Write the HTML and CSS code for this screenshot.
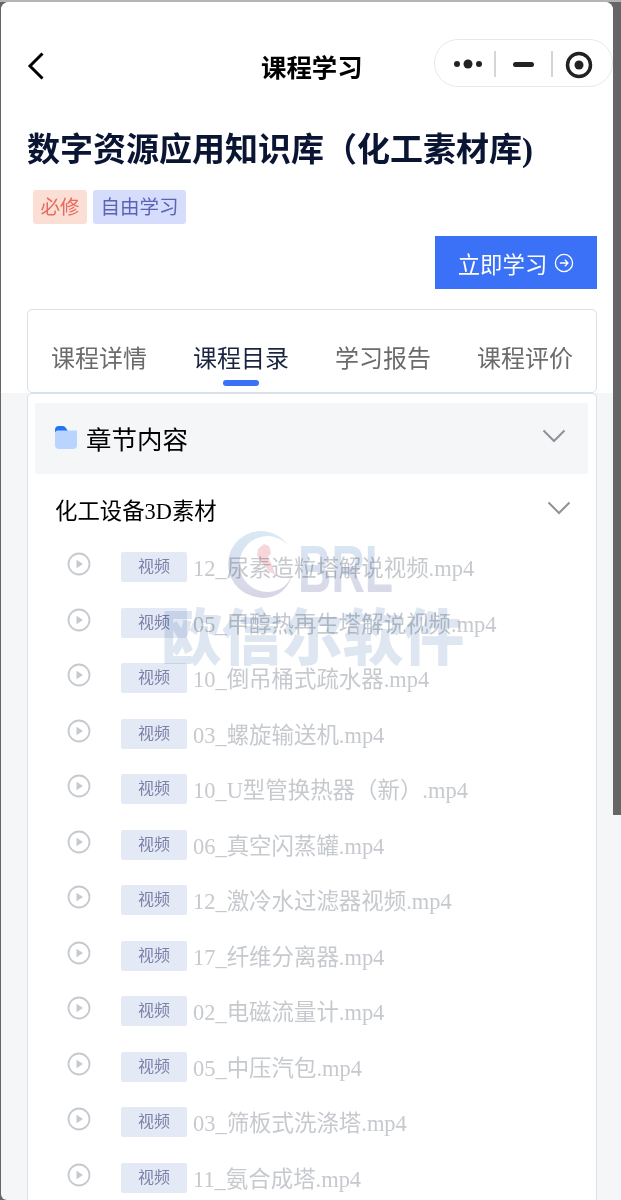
FILE: index.html
```html
<!DOCTYPE html>
<html lang="zh-CN">
<head>
  <meta charset="UTF-8">
  <title>课程学习</title>
  <meta name="viewport" content="width=device-width, initial-scale=1.0">
  <link rel="stylesheet" href="styles.css">
</head>
<body>
  <div class="top-strip"></div>

  <div class="window">
    <div class="phone">

      <!-- Header -->
      <div class="head">
        <div class="nav">
          <div class="back">
            <svg width="18" height="28" viewBox="0 0 18 28"><path d="M15.500 1.500 3 14l12.500 12.500" fill="none" stroke="#000" stroke-width="3"/></svg>
          </div>
          <div class="nav-title">课程学习</div>
          <div class="capsule">
            <svg width="179" height="48" viewBox="0 0 179 48">
              <circle cx="23" cy="25" r="3" fill="#222"/>
              <circle cx="34" cy="25" r="4.500" fill="#222"/>
              <circle cx="45" cy="25" r="3" fill="#222"/>
              <rect x="60" y="12" width="2" height="26" fill="#d5d5d5"/>
              <rect x="79" y="23" width="21" height="5" rx="2.500" fill="#222"/>
              <rect x="117" y="12" width="2" height="26" fill="#d5d5d5"/>
              <circle cx="145" cy="26" r="11.500" fill="none" stroke="#222" stroke-width="3.500"/>
              <circle cx="145" cy="26" r="4.500" fill="#222"/>
            </svg>
          </div>
        </div>

        <h1 class="course-title">数字资源应用知识库（化工素材库)</h1>

        <div class="tags">
          <span class="tag tag-red">必修</span>
          <span class="tag tag-blue">自由学习</span>
        </div>

        <div class="action">
          <button class="study-btn">立即学习
            <svg width="20" height="20" viewBox="0 0 20 20" fill="none" stroke="#fff" stroke-width="1.300"><circle cx="10" cy="10" r="8.600"/><path d="M5.800 10h8M10.800 6.800 14 10l-3.200 3.200"/></svg>
          </button>
        </div>

        <div class="tabs">
          <div class="tab">课程详情</div>
          <div class="tab active">课程目录</div>
          <div class="tab">学习报告</div>
          <div class="tab">课程评价</div>
        </div>
      </div>

      <!-- Catalogue -->
      <div class="catalog">
        <div class="chapter">
          <svg class="folder" width="22" height="23" viewBox="0 0 22 23">
            <path d="M0 6V4a4 4 0 0 1 4-4h4a3 3 0 0 1 2.500 1.500L13 5v1z" fill="#2273f5"/>
            <path d="M0 7a3 3 0 0 1 2-2.500h20V19a4 4 0 0 1-4 4H4a4 4 0 0 1-4-4z" fill="#b8d4ff"/>
          </svg>
          <span class="chapter-name">章节内容</span>
          <svg class="chev chev-up" width="24" height="14" viewBox="0 0 24 14"><path d="M1.500 1.500 12 12 22.500 1.500" fill="none" stroke="#8d9296" stroke-width="2"/></svg>
        </div>

        <div class="section">
          <span class="section-name">化工设备3D素材</span>
          <svg class="chev" width="24" height="14" viewBox="0 0 24 14"><path d="M1.500 1.500 12 12 22.500 1.500" fill="none" stroke="#8d9296" stroke-width="2"/></svg>
        </div>

        <ul class="files" id="files"></ul>
      </div>

      <!-- Watermark -->
      <svg class="watermark" width="340" height="170" viewBox="0 0 340 170">
        <defs>
          <linearGradient id="wmGrad" x1="0" y1="0" x2="0" y2="1">
            <stop offset="0" stop-color="#d8e9f5"/>
            <stop offset="1" stop-color="#d8d5e6"/>
          </linearGradient>
        </defs>
        <path d="M128 17A33 33 0 1 0 128 55A28 28 0 1 1 128 17z" fill="url(#wmGrad)"/>
        <path d="M84 12a30 30 0 0 1 44 8 31 31 0 0 0-44-8z" fill="#d8e9f5"/>
        <path d="M80 58a29 29 0 0 0 52-12 31 31 0 0 1-52 12z" fill="#d8d5e6"/>
        <path d="M98 21l6-5 5 2 2 7-3 4 5 10 2 8-6-4-7-8-5-8z" fill="#f6d6da"/>
        <text class="wm-letters" x="138" y="64" textLength="95" lengthAdjust="spacingAndGlyphs" fill="url(#wmGrad)">BRL</text>
        <text class="wm-name" x="1" y="132" textLength="303" fill="#dde6f1">欧信尔软件</text>
      </svg>

    </div>

    <div class="scroll-track"><div class="scroll-thumb"></div></div>
  </div>

  <script src="app.js"></script>
</body>
</html>
```

FILE: app.js
```js
const fileNames = [
  "12_尿素造粒塔解说视频.mp4",
  "05_甲醇热再生塔解说视频.mp4",
  "10_倒吊桶式疏水器.mp4",
  "03_螺旋输送机.mp4",
  "10_U型管换热器（新）.mp4",
  "06_真空闪蒸罐.mp4",
  "12_激冷水过滤器视频.mp4",
  "17_纤维分离器.mp4",
  "02_电磁流量计.mp4",
  "05_中压汽包.mp4",
  "03_筛板式洗涤塔.mp4",
  "11_氨合成塔.mp4"
];

const playIcon =
  '<svg class="play" width="24" height="24" viewBox="0 0 24 24">' +
  '<circle cx="12" cy="12" r="10.500" fill="none" stroke="#c6c9ce" stroke-width="1.800"/>' +
  '<path d="M9.500 7.800v8.400l6.500-4.200z" fill="#c6c9ce"/></svg>';

document.getElementById("files").innerHTML = fileNames.map(name =>
  '<li class="file">' + playIcon +
  '<span class="badge">视频</span>' +
  '<span class="file-name">' + name + '</span></li>'
).join("");
```

FILE: styles.css
```css
* {
  margin: 0;
  padding: 0;
  box-sizing: border-box;
}

html, body {
  height: 1200px;
  overflow: hidden;
}

body {
  background: #666;
  font-family: "Liberation Serif", "Noto Sans CJK SC", serif;
}

.top-strip {
  height: 2px;
  background: #b4b4b4;
}

.window {
  display: flex;
  height: 1198px;
  padding-left: 1px;
}

.phone {
  position: relative;
  width: 612px;
  height: 1198px;
  background: #f5f6f8;
  border-radius: 8px 8px 0 6px;
  overflow: hidden;
  flex-shrink: 0;
}

.scroll-track {
  flex: 1;
  background: #f5f6f8;
}

.scroll-thumb {
  height: 813px;
  background: #666;
}

/* HEADER */
.head {
  height: 391px;
  background: #fff;
  padding: 37px 0 0 26px;
}

.nav {
  display: flex;
  align-items: center;
  height: 48px;
}

.back {
  width: 234px;
  margin-top: 6px;
  flex-shrink: 0;
  display: flex;
}

.nav-title {
  margin-top: 6px;
  font-size: 25.400px;
  font-weight: bold;
  color: #000;
}

.capsule {
  margin-left: auto;
  width: 179px;
  height: 48px;
  border: 1px solid #e8e8e8;
  border-radius: 24px;
  display: flex;
  align-items: center;
  overflow: hidden;
}

.capsule svg {
  flex-shrink: 0;
  margin-left: -1px;
}

.course-title {
  margin-top: 43px;
  font-size: 33px;
  line-height: 40px;
  font-weight: bold;
  color: #0a1433;
  white-space: nowrap;
}

.tags {
  display: flex;
  gap: 6px;
  margin: 20px 0 0 6px;
}

.tag {
  height: 34px;
  line-height: 36px;
  padding: 0 7.500px;
  border-radius: 3px;
  font-size: 19.500px;
}

.tag-red {
  background: #fbdfd5;
  color: #e9695c;
}

.tag-blue {
  background: #d6dcfc;
  color: #5b63b5;
}

.action {
  display: flex;
  justify-content: flex-end;
  margin: 12px 16px 0 0;
}

.study-btn {
  display: flex;
  align-items: center;
  justify-content: center;
  gap: 7px;
  width: 162px;
  height: 53px;
  border: none;
  background: #3a71f6;
  color: #fff;
  font-family: inherit;
  font-size: 22.400px;
}

.tabs {
  display: flex;
  justify-content: center;
  gap: 46px;
  width: 570px;
  height: 84px;
  margin-top: 20px;
  padding-top: 31px;
  border: 1px solid #d8e2e8;
  border-radius: 5px;
  background: #fff;
}

.tab {
  position: relative;
  font-size: 24px;
  line-height: 36px;
  color: #6b6b6b;
}

.tab.active {
  color: #1a2340;
}

.tab.active::after {
  content: "";
  position: absolute;
  left: 30px;
  top: 39px;
  width: 36px;
  height: 6px;
  border-radius: 3px;
  background: #3a71f6;
}

/* CATALOGUE */
.catalog {
  width: 570px;
  height: 807px;
  margin-left: 26px;
  padding: 9px 8px 0 7px;
  background: #fff;
  border: 1px solid #d8e2e8;
  border-bottom: none;
  border-radius: 5px 5px 0 0;
}

.chapter {
  display: flex;
  align-items: center;
  height: 71px;
  padding: 0 22px 0 20px;
  background: #f5f6f8;
  border-radius: 2px;
}

.folder {
  margin-top: -3px;
}

.chapter-name {
  margin: -2px 0 0 9px;
  font-size: 25.500px;
  color: #000;
}

.chev {
  margin-left: auto;
}

.chev-up {
  margin-top: -6px;
}

.section {
  display: flex;
  align-items: center;
  height: 68px;
  padding: 0 17px 0 20px;
}

.section-name {
  margin-top: 2px;
  font-size: 22.400px;
  color: #000;
}

.files {
  list-style: none;
}

.file {
  display: flex;
  align-items: flex-start;
  height: 55.500px;
  padding-left: 32px;
}

.play {
  margin-top: 10px;
  flex-shrink: 0;
}

.badge {
  width: 66px;
  height: 30px;
  margin: 10px 6px 0 30px;
  background: #e4e9f6;
  border-radius: 2px;
  font-size: 16px;
  line-height: 30px;
  text-align: center;
  color: #7b82a8;
  flex-shrink: 0;
}

.file-name {
  margin-top: 11px;
  font-size: 22.450px;
  line-height: 32px;
  color: #c6c9ce;
  white-space: nowrap;
}

/* WATERMARK */
.watermark {
  position: absolute;
  left: 159px;
  top: 526px;
  mix-blend-mode: multiply;
  pointer-events: none;
}

.wm-letters {
  font-family: "Liberation Sans", sans-serif;
  font-size: 66px;
  font-weight: bold;
}

.wm-name {
  font-family: "Noto Sans CJK SC", sans-serif;
  font-size: 61px;
  font-weight: 900;
}
```
